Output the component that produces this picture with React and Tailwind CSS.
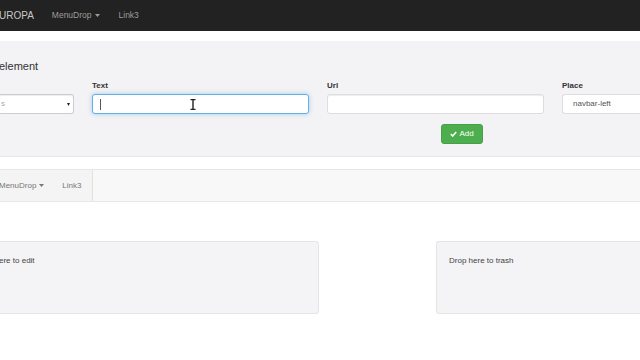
import React from "react";

const font = { fontFamily: '"Liberation Sans", Arial, sans-serif' };

function Caret() {
  return (
    <svg width="5" height="3" viewBox="0 0 5 3" className="ml-[3px] inline-block">
      <path d="M0 0h5L2.5 3z" fill="currentColor" />
    </svg>
  );
}

function IBeam() {
  return (
    <svg width="6" height="11" viewBox="0 0 6 11" className="block">
      <path d="M0.5 0.5h5M0.5 10.5h5M3 0.5v10" stroke="#222" strokeWidth="1.4" fill="none" />
    </svg>
  );
}

export default function App() {
  return (
    <div className="w-[640px] h-[360px] overflow-hidden bg-white text-[#333]" style={font}>
      {/* top navbar */}
      <div className="h-[31px] bg-[#222] flex items-center text-[8.5px] text-[#9d9d9d]">
        <span className="text-[10px] text-[#c8c8c8] -ml-[1px]">UROPA</span>
        <span className="ml-[18px] flex items-center">
          MenuDrop
          <Caret />
        </span>
        <span className="ml-[19px]">Link3</span>
      </div>

      {/* form well */}
      <div className="mt-[10px] h-[116px] bg-[#f3f2f4] border-b border-[#e6e5e7] overflow-hidden">
        <div className="pt-[19px] text-[11px] leading-[13px] -ml-[1px]">element</div>
        <div className="mt-[8px] flex gap-[18px] items-end">
          <div className="w-[74px] shrink-0">
            <div className="h-[20px] bg-white border border-[#ccc] border-l-0 rounded-r-[3px] flex items-center justify-between pr-[3px] shadow-[inset_0_1px_1px_rgba(0,0,0,0.075)]">
              <span className="text-[8px] text-[#aaa] ml-[1px]">s</span>
              <svg width="3" height="3" viewBox="0 0 3 3">
                <path d="M0 0h3L1.5 3z" fill="#222" />
              </svg>
            </div>
          </div>
          <div className="w-[217px] shrink-0">
            <div className="text-[8px] font-bold leading-[10px] mb-[3px]">Text</div>
            <div className="h-[20px] bg-white border border-[#66afe9] rounded-[3px] shadow-[0_0_4px_rgba(102,175,233,0.6)] flex items-center">
              <span className="ml-[7px] w-px h-[11px] bg-[#555]"></span>
              <span className="ml-[89px]">
                <IBeam />
              </span>
            </div>
          </div>
          <div className="w-[217px] shrink-0">
            <div className="text-[8px] font-bold leading-[10px] mb-[3px]">Url</div>
            <div className="h-[20px] bg-white border border-[#ddd] rounded-[3px] shadow-[inset_0_1px_1px_rgba(0,0,0,0.075)]"></div>
          </div>
          <div className="w-[100px] shrink-0">
            <div className="text-[8px] font-bold leading-[10px] mb-[3px]">Place</div>
            <div className="h-[20px] bg-white border border-[#ddd] border-r-0 rounded-l-[3px] flex items-center pl-[10px] text-[8px] text-[#555]">
              navbar-left
            </div>
          </div>
        </div>
        <div className="mt-[10px] ml-[441px] w-[42px] h-[20px] bg-[#4cae4c] rounded-[3px] border border-[#4a9d4a] flex items-center justify-center text-white text-[8px]">
          <svg width="7" height="6" viewBox="0 0 7 6" className="mr-[2px]">
            <path d="M0.8 3.2L2.7 5L6.2 0.9" stroke="#fff" strokeWidth="1.6" fill="none" />
          </svg>
          Add
        </div>
      </div>

      {/* preview navbar */}
      <div className="mt-[12px] h-[33px] bg-[#f8f8f8] border-y border-[#e7e7e7] flex">
        <div className="w-[93px] h-full border-r border-[#e2e2e2] bg-[#f4f4f4] flex items-center text-[8px] text-[#777]">
          <span className="-ml-[1px] flex items-center">
            MenuDrop
            <Caret />
          </span>
          <span className="ml-[18px]">Link3</span>
        </div>
      </div>

      {/* drop zones */}
      <div className="mt-[39px] flex justify-between">
        <div className="w-[319px] h-[73px] bg-[#f4f3f5] border border-[#e5e5e5] border-l-0 rounded-r-[3px] pt-[13px] text-[8px] text-[#444]">
          <span className="-ml-[1px]">ere to edit</span>
        </div>
        <div className="w-[204px] h-[73px] bg-[#f4f3f5] border border-[#e5e5e5] border-r-0 rounded-l-[3px] pt-[13px] pl-[12px] text-[8px] text-[#444]">
          Drop here to trash
        </div>
      </div>
    </div>
  );
}
